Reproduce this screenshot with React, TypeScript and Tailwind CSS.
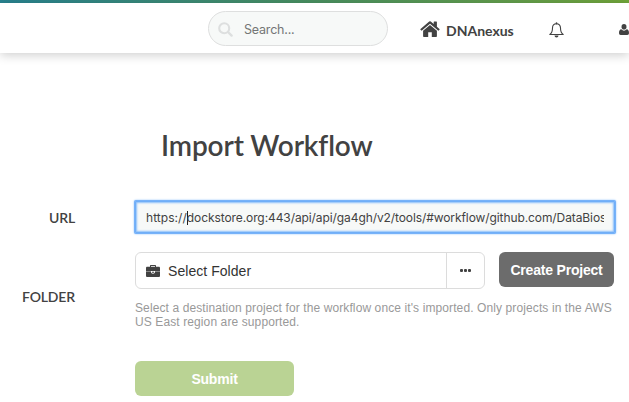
import type { SVGProps } from "react";

function SearchIcon(props: SVGProps<SVGSVGElement>) {
  return (
    <svg viewBox="0 0 15 15" fill="none" stroke="currentColor" {...props}>
      <circle cx="6.2" cy="6.2" r="5" strokeWidth="2.1" />
      <path d="M10 10l3.6 3.6" strokeWidth="2.4" strokeLinecap="round" />
    </svg>
  );
}

function HomeIcon(props: SVGProps<SVGSVGElement>) {
  return (
    <svg viewBox="0 0 20 16" fill="currentColor" {...props}>
      <path d="M9.2.6a1.2 1.2 0 0 1 1.6 0l2.9 2.5V.9c0-.3.2-.5.5-.5h2.2c.3 0 .5.2.5.5v4.8l2.6 2.2c.3.2.3.5.1.7l-.8.9c-.2.2-.5.2-.7 0L10 2.7 1.9 9.5c-.2.2-.5.2-.7 0l-.8-.9c-.2-.2-.2-.5.1-.7z" />
      <path d="M10 4l6.9 5.8v5.5c0 .4-.3.7-.7.7h-4.4v-4.7H8.2V16H3.8c-.4 0-.7-.3-.7-.7V9.800z" />
    </svg>
  );
}

function BellIcon(props: SVGProps<SVGSVGElement>) {
  return (
    <svg viewBox="0 0 16 16" fill="none" stroke="currentColor" {...props}>
      <path d="M7.500 1.700c-2.400 0-4 1.700-4 4.300 0 3.700-.7 5.200-2.700 6.500h13.400c-2-1.300-2.700-2.800-2.700-6.500 0-2.600-1.600-4.300-4-4.300z" strokeWidth="1.100" strokeLinejoin="round" />
      <path d="M7.500 1v.8" strokeWidth="1.600" strokeLinecap="round" />
      <path d="M5.500 13.500h4a2 2 0 0 1-4 0z" fill="currentColor" stroke="none" />
    </svg>
  );
}

function UserIcon(props: SVGProps<SVGSVGElement>) {
  return (
    <svg viewBox="0 0 10 11" fill="currentColor" {...props}>
      <ellipse cx="5" cy="2.800" rx="2.500" ry="2.800" />
      <path d="M2.300 5.300C.7 5.500 0 6.900 0 9c0 1.300.6 2 1.700 2h6.600C9.400 11 10 10.300 10 9c0-2.100-.7-3.500-2.300-3.700a3.800 3.800 0 0 1-5.400 0z" />
    </svg>
  );
}

function BriefcaseIcon(props: SVGProps<SVGSVGElement>) {
  return (
    <svg viewBox="0 0 14 12" fill="currentColor" {...props}>
      <path fillRule="evenodd" d="M4 1.800V.7C4 .3 4.300 0 4.700 0h4.600c.4 0 .7.3.7.700v1.100h2.700c.8 0 1.300.5 1.300 1.300v3.400H9V6H5v.5H0V3.100c0-.8.5-1.300 1.300-1.300zm1 0h4V1H5z" />
      <path d="M0 6.700h5c0 1.300.7 2 2 2s2-.7 2-2h5v4c0 .8-.5 1.300-1.300 1.300H1.300C.5 12 0 11.500 0 10.700z" />
      <path d="M6 6.700h2v1.100H6z" />
    </svg>
  );
}

export default function App() {
  return (
    <div className="h-[402px] w-[629px] overflow-hidden bg-white font-['Liberation_Sans',sans-serif] text-[#424242]">
      <div className="h-[3px] bg-linear-to-r from-[#288390] via-[#499060] to-[#71a63a]" />
      <header className="flex h-[50px] items-start bg-white pl-[208px] shadow-[0_2px_10px_0_rgba(0,0,0,0.2)]">
        <div className="mt-2 flex h-[35px] w-[180px] shrink-0 items-center rounded-full border border-[#dedfdf] bg-[#f7f9f8] pl-[9px]">
          <SearchIcon className="mt-[2px] h-[15px] w-[15px] text-[#dddfdf]" />
          <span className="mt-[2px] ml-[11px] font-['Inter',sans-serif] text-[12.5px] leading-4 tracking-[-0.2px] text-[#747676]">Search...</span>
        </div>
        <HomeIcon className="mt-[18px] ml-[32px] h-4 w-5 shrink-0" />
        <span className="mt-[18px] ml-[6px] w-[68px] shrink-0 font-['Lato',sans-serif] text-[14px] leading-5 font-bold">DNAnexus</span>
        <BellIcon className="mt-[19px] ml-[35px] h-4 w-4 shrink-0" />
        <UserIcon className="mt-[21px] ml-[54px] h-[11px] w-[10px] shrink-0" />
      </header>
      <main>
        <h1 className="mt-[74px] ml-[161px] font-['Lato',sans-serif] text-[28px] leading-9 font-semibold tracking-[-0.12px] whitespace-nowrap">Import Workflow</h1>
        <div className="mt-[38px] flex">
          <label className="mt-[7px] w-[75px] text-right font-['Lato',sans-serif] text-[14px] leading-5 font-semibold tracking-[-0.15px]">URL</label>
          <div className="ml-[60px] flex h-[32px] w-[480px] items-center rounded-[1px] border border-[#70aef7] bg-[#f7f9f8] px-[10px] shadow-[0_0_0_1px_#76b2f9,0_0_2px_1px_#8abefb,inset_0_0_2px_1px_#8abefb]">
            <div className="mt-[2px] flex w-full items-center overflow-hidden font-['Inter',sans-serif] text-[12px] leading-5 tracking-[-0.09px] whitespace-nowrap">
              <span className="tracking-[0.05px]">https://</span>
              <span className="mr-[-1px] h-[14px] w-px shrink-0 bg-[#202020]" />
              <span>dockstore.org:443/api/api/ga4gh/v2/tools/#workflow/github.com/DataBios</span>
            </div>
          </div>
        </div>
        <div className="mt-[19px] flex">
          <label className="mt-[35px] w-[75px] text-right font-['Lato',sans-serif] text-[14px] leading-5 font-semibold tracking-[-0.15px]">FOLDER</label>
          <div className="ml-[60px]">
            <div className="flex items-start">
              <div className="flex h-[37px] w-[350px] rounded-md border border-[#dcdcdc]">
                <div className="flex w-[311px] items-center border-r border-[#dcdcdc] pl-[10px]">
                  <BriefcaseIcon className="h-3 w-[14px]" />
                  <span className="ml-2 text-[14px] leading-5 tracking-[0.05px] text-[#333]">Select Folder</span>
                </div>
                <div className="flex flex-1 items-center justify-center gap-px">
                  <i className="h-[3px] w-[3px] rounded-[1px] bg-[#424242]" />
                  <i className="h-[3px] w-[3px] rounded-[1px] bg-[#424242]" />
                  <i className="h-[3px] w-[3px] rounded-[1px] bg-[#424242]" />
                </div>
              </div>
              <button className="ml-[14px] h-[35px] w-[115px] rounded-md bg-[#6c6c6c] pt-0.5 text-[14px] font-bold tracking-[-0.2px] whitespace-nowrap text-white">Create Project</button>
            </div>
            <p className="mt-3 text-[12px] leading-[14px] tracking-[0.105px] whitespace-nowrap text-[#999]">
              Select a destination project for the workflow once it's imported. Only projects in the AWS
              <br />
              US East region are supported.
            </p>
          </div>
        </div>
        <button className="mt-8 ml-[135px] h-[35px] w-[159px] rounded-md bg-[#bad394] pt-0.5 text-[14px] font-bold tracking-[-0.2px] text-white">Submit</button>
      </main>
    </div>
  );
}
